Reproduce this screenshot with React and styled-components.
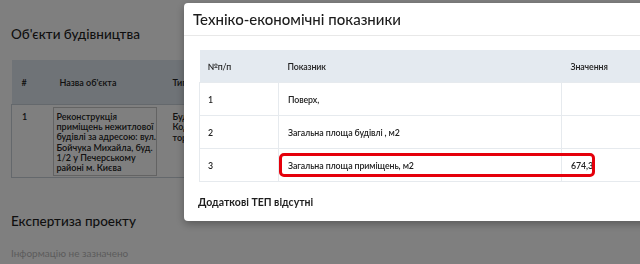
import React from 'react';
import styled, { createGlobalStyle } from 'styled-components';

const GlobalStyle = createGlobalStyle`
  html, body {
    margin: 0;
    padding: 0;
    width: 640px;
    height: 264px;
    overflow: hidden;
    background: #fff;
    font-family: Lato, "Liberation Sans", sans-serif;
    color: #222;
  }
`;

const Page = styled.div`
  padding: 24px 0 0 11px;
`;

const SectionTitle = styled.h2`
  margin: 0;
  font-size: 13.5px;
  font-weight: 500;
  line-height: 20px;
  color: #1f1f1f;
`;

const ObjectsTable = styled.table`
  margin-top: 16px;
  border-collapse: collapse;
  width: 700px;
  font-size: 9px;
  font-weight: 600;

  th {
    background: #dfe7ee;
    height: 44px;
    text-align: left;
    font-weight: 600;
    padding: 0 8px 0 10px;
  }
  td {
    vertical-align: top;
    padding: 2px 6px 1px 10px;
    border-top: 1px solid #c9d1d8;
    border-bottom: 1px solid #c9d1d8;
  }
  tr td:first-child {
    border-left: 1px solid #c9d1d8;
  }
`;

const NameBox = styled.div`
  border: 1px solid #c7c7c7;
  padding: 4px 4px 2px 3px;
  width: 95px;
  line-height: 10.2px;
  margin-left: -7px;
  white-space: nowrap;
`;

const CellText = styled.div`
  padding-top: ${p => p.$top || 0}px;
  line-height: 10.4px;
`;

const Expertise = styled(SectionTitle)`
  margin-top: 33px;
`;

const Muted = styled.p`
  margin: 16px 0 0;
  font-size: 10px;
  color: #b9b9b9;
`;

const Backdrop = styled.div`
  position: fixed;
  inset: 0;
  background: rgba(0, 0, 0, 0.5);
`;

const Modal = styled.div`
  position: absolute;
  left: 184px;
  top: 3px;
  width: 520px;
  background: #fff;
  border-radius: 4px;
  box-shadow: 0 3px 9px rgba(0, 0, 0, 0.3);
`;

const ModalHeader = styled.div`
  height: 32px;
  padding: 0 9px;
  display: flex;
  align-items: center;
  border-bottom: 1px solid #e8e8e8;
  font-size: 15px;
  font-weight: 500;
  color: #1c1c1c;
`;

const ModalBody = styled.div`
  padding: 14px 15px 0;
`;

const TepWrap = styled.div`
  position: relative;
`;

const TepTable = styled.table`
  border-collapse: collapse;
  width: 100%;
  font-size: 8.8px;
  letter-spacing: -0.1px;
  font-weight: 600;
  color: #222;

  th {
    background: #e4eaf0;
    height: 32px;
    text-align: left;
    font-weight: 600;
    padding: 0 8px;
  }
  td {
    height: 32px;
    padding: 0 8px;
    border: 1px solid #e6eaee;
  }
  th:nth-child(1), td:nth-child(1) { width: 62px; }
  th:nth-child(2), td:nth-child(2) { width: 265px; padding-left: 9px; }
  td:nth-child(3), th:nth-child(3) { padding-left: 9px; }
`;

const Highlight = styled.div`
  position: absolute;
  left: 80px;
  top: 103px;
  width: 310px;
  height: 18px;
  border: 3.5px solid #e5000b;
  border-radius: 5px;
`;

const Footer = styled.div`
  padding: 13px 14px 12px;
  font-size: 10.5px;
  font-weight: 700;
  color: #1f1f1f;
  line-height: 14px;
`;

const rows = [
  { n: 1, name: 'Поверх,', value: '' },
  { n: 2, name: 'Загальна площа будівлі , м2', value: '' },
  { n: 3, name: 'Загальна площа приміщень, м2', value: '674,3' },
];

const nameLines = [
  'Реконструкція',
  'приміщень нежитлової',
  'будівлі за адресою: вул.',
  'Бойчука Михайла, буд.',
  '1/2 у Печерському',
  'районі м. Києва',
];

export default function App() {
  return (
    <>
      <GlobalStyle />
      <Page>
        <SectionTitle>Об'єкти будівництва</SectionTitle>
        <ObjectsTable>
          <thead>
            <tr>
              <th style={{ width: 20 }}>#</th>
              <th style={{ width: 90 }}>Назва об'єкта</th>
              <th>Тип об'єкта</th>
            </tr>
          </thead>
          <tbody>
            <tr>
              <td><CellText $top={5}>1</CellText></td>
              <td>
                <NameBox>
                  {nameLines.map(l => <div key={l}>{l}</div>)}
                </NameBox>
              </td>
              <td>
                <CellText $top={5}>Будівлі<br />Код<br />торгівлі</CellText>
              </td>
            </tr>
          </tbody>
        </ObjectsTable>
        <Expertise>Експертиза проекту</Expertise>
        <Muted>Інформацію не зазначено</Muted>
      </Page>
      <Backdrop>
        <Modal>
          <ModalHeader>Техніко-економічні показники</ModalHeader>
          <ModalBody>
            <TepWrap>
              <TepTable>
                <thead>
                  <tr>
                    <th>№п/п</th>
                    <th>Показник</th>
                    <th>Значення</th>
                  </tr>
                </thead>
                <tbody>
                  {rows.map(r => (
                    <tr key={r.n}>
                      <td>{r.n}</td>
                      <td>{r.name}</td>
                      <td>{r.value}</td>
                    </tr>
                  ))}
                </tbody>
              </TepTable>
              <Highlight />
            </TepWrap>
          </ModalBody>
          <Footer>Додаткові ТЕП відсутні</Footer>
        </Modal>
      </Backdrop>
    </>
  );
}
